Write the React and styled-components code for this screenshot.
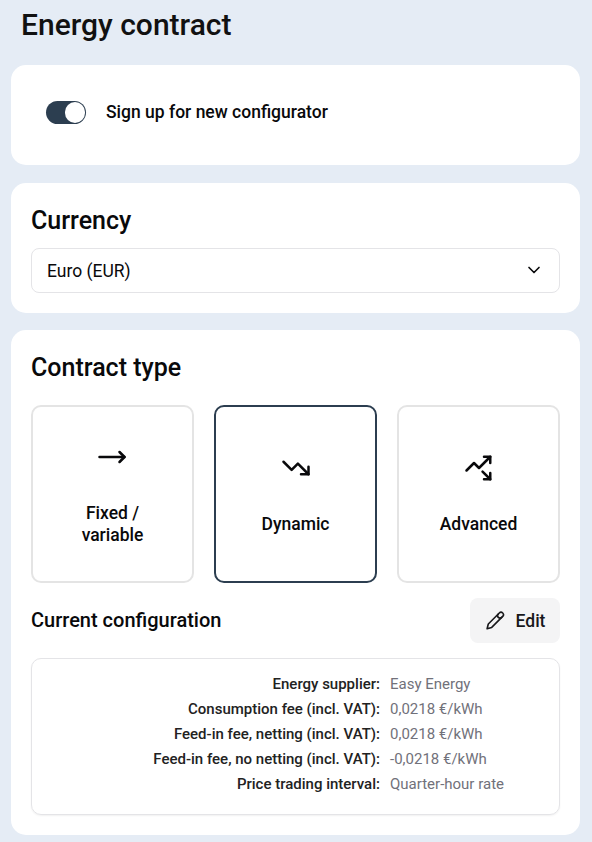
import React, { useState } from 'react';
import styled, { createGlobalStyle } from 'styled-components';
import { ChevronDown, MoveRight, TrendingDown, TrendingUpDown } from 'lucide-react';

const contractTypes = [
    { id: 'fixed', label: 'Fixed / variable', icon: MoveRight },
    { id: 'dynamic', label: 'Dynamic', icon: TrendingDown },
    { id: 'advanced', label: 'Advanced', icon: TrendingUpDown },
];

const configuration = [
    { label: 'Energy supplier:', value: 'Easy Energy' },
    { label: 'Consumption fee (incl. VAT):', value: '0,0218 €/kWh' },
    { label: 'Feed-in fee, netting (incl. VAT):', value: '0,0218 €/kWh' },
    { label: 'Feed-in fee, no netting (incl. VAT):', value: '-0,0218 €/kWh' },
    { label: 'Price trading interval:', value: 'Quarter-hour rate' },
];

const PencilIcon = () => (
    <svg width="20" height="20" viewBox="0 0 20 20" fill="none" stroke="currentColor" strokeWidth="1.6" strokeLinecap="round" strokeLinejoin="round">
        <path d="M2.1 17.7 3.3 13 14.3 2a2.4 2.4 0 0 1 3.4 3.4L6.7 16.4Z" />
        <path d="M13.3 3a2.4 2.4 0 0 0 3.4 3.4" />
    </svg>
);

const App = () => {
    const [enabled, setEnabled] = useState(true);
    const [selected, setSelected] = useState('dynamic');

    return (
        <Page>
            <GlobalStyle />
            <PageTitle>Energy contract</PageTitle>

            <SignupCard>
                <Switch role="switch" aria-checked={enabled} $on={enabled} onClick={() => setEnabled(!enabled)}>
                    <Knob />
                </Switch>
                <SwitchLabel>Sign up for new configurator</SwitchLabel>
            </SignupCard>

            <CurrencyCard>
                <CardTitle>Currency</CardTitle>
                <SelectBox>
                    <span>Euro (EUR)</span>
                    <ChevronDown size={20} />
                </SelectBox>
            </CurrencyCard>

            <ContractCard>
                <CardTitle>Contract type</CardTitle>
                <TypeGrid>
                    {contractTypes.map(({ id, label, icon: Icon }) => (
                        <TypeButton key={id} $active={id === selected} onClick={() => setSelected(id)}>
                            <Icon size={30} />
                            <TypeLabel>{label}</TypeLabel>
                        </TypeButton>
                    ))}
                </TypeGrid>
                <ConfigHeader>
                    <ConfigTitle>Current configuration</ConfigTitle>
                    <EditButton>
                        <PencilIcon />
                        Edit
                    </EditButton>
                </ConfigHeader>
                <ConfigTable>
                    {configuration.map(({ label, value }) => (
                        <React.Fragment key={label}>
                            <ConfigLabel>{label}</ConfigLabel>
                            <ConfigValue>{value}</ConfigValue>
                        </React.Fragment>
                    ))}
                </ConfigTable>
            </ContractCard>
        </Page>
    );
};

const GlobalStyle = createGlobalStyle`
    * {
        box-sizing: border-box;
    }
    body {
        margin: 0;
        background: #e5ecf5;
        color: #09090b;
        font-family: Roboto, "Liberation Sans", sans-serif;
    }
    h1, h2, h3, dl, dd {
        margin: 0;
        font-weight: 500;
    }
    button {
        border: 0;
        padding: 0;
        color: inherit;
        font-family: inherit;
        cursor: pointer;
    }
`;

const Page = styled.main`
    min-height: 842px;
    padding: 5px 12px 7px 11px;
`;

const PageTitle = styled.h1`
    height: 60px;
    padding-left: 10px;
    font-size: 30px;
    line-height: 40px;
    color: #111;
`;

const Card = styled.section`
    padding: 20px;
    border-radius: 15px;
    background: #fff;
`;

const SignupCard = styled(Card)`
    display: flex;
    align-items: flex-start;
    gap: 20px;
    height: 100px;
    padding: 36px 35px;
`;

const Switch = styled.button`
    display: flex;
    align-items: center;
    justify-content: ${({ $on }) => ($on ? 'flex-end' : 'flex-start')};
    width: 40px;
    height: 23px;
    padding: 1px;
    border-radius: 12px;
    background: ${({ $on }) => ($on ? '#2c3e50' : '#ccc')};
`;

const Knob = styled.span`
    width: 20.5px;
    height: 20.5px;
    border-radius: 50%;
    background: #fff;
`;

const SwitchLabel = styled.span`
    font-size: 17.5px;
    font-weight: 500;
    line-height: 22px;
`;

const CurrencyCard = styled(Card)`
    height: 130px;
    margin-top: 18px;
`;

const CardTitle = styled.h2`
    height: 45px;
    font-size: 25px;
    line-height: 36px;
`;

const SelectBox = styled.div`
    display: flex;
    align-items: center;
    justify-content: space-between;
    height: 45px;
    padding: 0 15px;
    border: 1px solid #e4e4e7;
    border-radius: 8px;
    font-size: 17.5px;

    svg {
        margin-bottom: 2px;
    }
`;

const ContractCard = styled(Card)`
    height: 505px;
    margin-top: 17px;
`;

const TypeGrid = styled.div`
    display: grid;
    grid-template-columns: repeat(3, 1fr);
    gap: 20px;
    margin-top: 10px;
`;

const TypeButton = styled.button`
    display: flex;
    flex-direction: column;
    align-items: center;
    justify-content: center;
    gap: 30px;
    height: 178px;
    padding-bottom: 1px;
    border: 2px solid ${({ $active }) => ($active ? '#2c3e50' : '#e4e4e4')};
    border-radius: 10px;
    background: #fff;

    .lucide-move-right {
        margin-right: 1px;
    }
`;

const TypeLabel = styled.span`
    width: 80px;
    font-size: 17.5px;
    font-weight: 500;
    line-height: 22px;
`;

const ConfigHeader = styled.div`
    display: flex;
    align-items: center;
    justify-content: space-between;
    margin-top: 15px;
`;

const ConfigTitle = styled.h3`
    padding-bottom: 2px;
    font-size: 20px;
`;

const EditButton = styled.button`
    display: flex;
    align-items: center;
    justify-content: center;
    gap: 11px;
    width: 90px;
    height: 45px;
    border-radius: 8px;
    background: #f4f4f5;
    color: #18181b;
    font-size: 17.5px;
    font-weight: 500;
`;

const ConfigTable = styled.dl`
    display: grid;
    grid-template-columns: 348px 1fr;
    grid-auto-rows: 25px;
    column-gap: 10px;
    height: 157px;
    margin-top: 15px;
    padding: 13px 0;
    border: 1px solid #e4e4e7;
    border-radius: 10px;
    box-shadow: 0 1px 2px rgba(0, 0, 0, 0.06);
    font-size: 15px;
    line-height: 25px;
`;

const ConfigLabel = styled.dt`
    font-weight: 500;
    text-align: right;
    color: #222;
`;

const ConfigValue = styled.dd`
    font-weight: 400;
    color: #71717a;
`;

export default App;
